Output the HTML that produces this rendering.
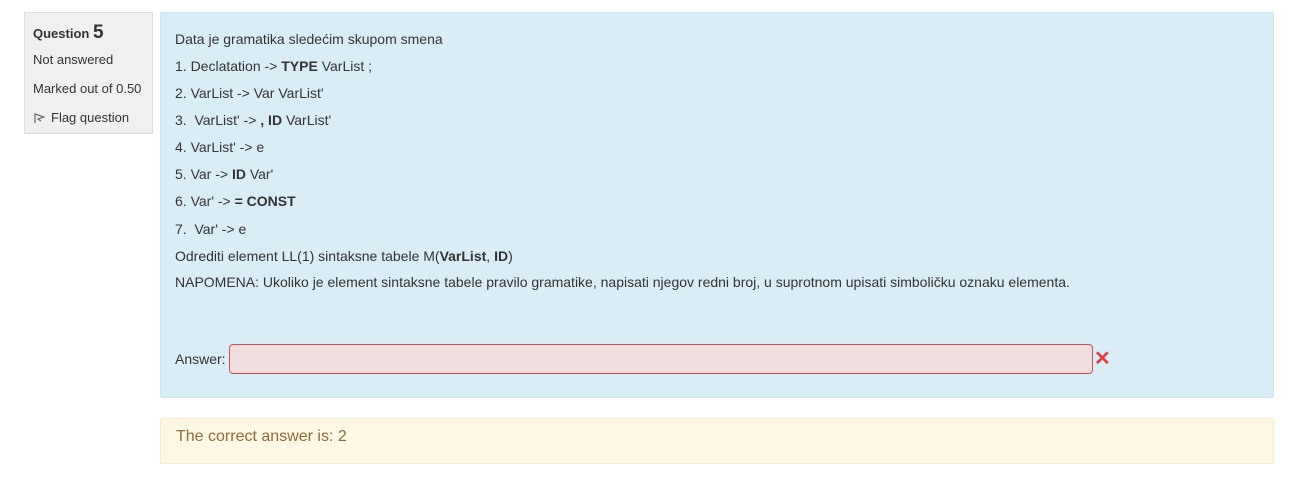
<!DOCTYPE html>
<html><head><meta charset="utf-8"><style>
body{margin:0;background:#fff;font-family:"Liberation Sans",Arial,sans-serif;color:#333;width:1306px;height:482px;position:relative;overflow:hidden}
.info{position:absolute;left:24px;top:12px;width:129px;height:122px;background:#f0f0f0;border:1px solid #ddd;box-sizing:border-box;font-size:13px}
.info div{position:absolute;left:8px}
.q{position:absolute;left:160px;top:12px;width:1114px;height:386px;background:#d9edf7;border:1px solid #cde4ef;box-sizing:border-box;border-radius:2px;font-size:14px}
.q p{position:absolute;left:14px;margin:0;white-space:nowrap}
.inp{position:absolute;left:68px;top:331px;width:864px;height:30px;background:#f2dede;border:1px solid #c9525a;border-radius:4px;box-sizing:border-box}
.x{position:absolute;left:933px;top:333px;color:#e04040;font-size:20px;font-weight:bold}
.fb{position:absolute;left:160px;top:418px;width:1114px;height:46px;background:#fcf8e3;border:1px solid #f6ecc9;box-sizing:border-box;border-radius:2px;color:#8a6d3b;font-size:16px}
</style></head><body>
<div class="info">
<div style="top:9px;font-weight:bold;font-size:13px">Question <span style="font-size:19px">5</span></div>
<div style="top:39px">Not answered</div>
<div style="top:68px">Marked out of 0.50</div>
<div style="top:97px"><svg width="12" height="12" viewBox="0 0 12 12" style="vertical-align:-2px;margin-right:6px"><path d="M2 11V2l9 3-6 2 3 2" fill="none" stroke="#666" stroke-width="1.2"/></svg>Flag question</div>
</div>
<div class="q">
<p style="top:18px">Data je gramatika sledećim skupom smena</p>
<p style="top:45px">1. Declatation -&gt; <b>TYPE</b> VarList ;</p>
<p style="top:72px">2. VarList -&gt; Var VarList'</p>
<p style="top:99px">3.&nbsp; VarList' -&gt; <b>, ID</b> VarList'</p>
<p style="top:126px">4. VarList' -&gt; e</p>
<p style="top:153px">5. Var -&gt; <b>ID</b> Var'</p>
<p style="top:180px">6. Var' -&gt; <b>= CONST</b></p>
<p style="top:208px">7.&nbsp; Var' -&gt; e</p>
<p style="top:235px">Odrediti element LL(1) sintaksne tabele M(<b>VarList</b>, <b>ID</b>)</p>
<p style="top:261px">NAPOMENA: Ukoliko je element sintaksne tabele pravilo gramatike, napisati njegov redni broj, u suprotnom upisati simboličku oznaku elementa.</p>
<p style="top:338px">Answer:</p>
<div class="inp"></div>
<div class="x">✕</div>
</div>
<div class="fb"><span style="position:absolute;left:15px;top:9px">The correct answer is: 2</span></div>
</body></html>
